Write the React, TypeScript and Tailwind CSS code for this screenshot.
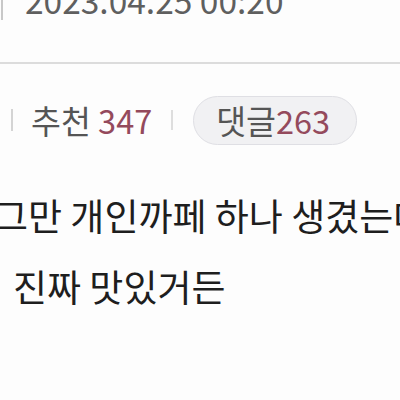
import React from "react";

export default function App() {
  return (
    <div
      className="w-[400px] h-[400px] overflow-hidden bg-[#fdfdfd] text-[#222]"
      style={{ fontFamily: '"Noto Sans CJK KR", "Noto Sans", sans-serif' }}
    >
      {/* date row */}
      <div className="flex items-end h-[22px] overflow-hidden">
        <div className="w-[2px] h-[20px] bg-[#c8c8c8] ml-[1px] self-start" />
        <div className="ml-[22px] text-[33.5px] leading-[34px] text-[#5f5f5f] whitespace-nowrap mb-[5px]">
          2023.04.25 00:20
        </div>
      </div>
      {/* divider */}
      <div className="mt-[40px] h-[2px] bg-[#dcdcdc]" />
      {/* stats row */}
      <div className="mt-[31px] flex items-center h-[50px]">
        <div className="ml-[11px] w-[2px] h-[22px] bg-[#d4d4d4]" />
        <div className="ml-[18px] text-[32.5px] leading-none text-[#555] whitespace-nowrap">
          추천 <span className="text-[#944a5c]">347</span>
        </div>
        <div className="ml-[19px] w-[2px] h-[20px] bg-[#dedede]" />
        <div className="ml-[20px] h-[49px] w-[164px] shrink-0 rounded-full bg-[#f1f1f3] border border-[#dfdfe4] flex items-center pl-[22px] text-[32.5px] leading-none text-[#555] whitespace-nowrap">
          댓글<span className="text-[#944a5c]">263</span>
        </div>
      </div>
      {/* body */}
      <div className="mt-[35px] text-[37px] leading-[71px] text-[#1e1e1e] whitespace-nowrap">
        <div className="ml-[-6px]">그만 개인까페 하나 생겼는데</div>
        <div className="ml-[13px]">진짜 맛있거든</div>
      </div>
    </div>
  );
}
